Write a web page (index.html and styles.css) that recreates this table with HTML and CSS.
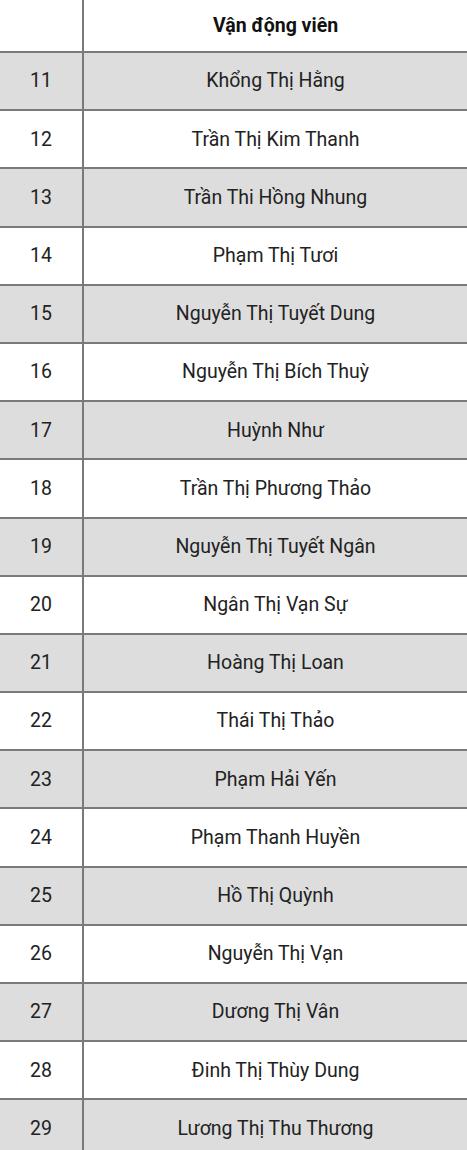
FILE: index.html
```html
<!DOCTYPE html>
<html lang="vi">
<head>
<meta charset="utf-8">
<link rel="stylesheet" href="styles.css">
</head>
<body>
<table class="roster">
  <thead>
    <tr><th class="num"></th><th class="name">Vận động viên</th></tr>
  </thead>
  <tbody>
    <tr class="alt"><td class="num">11</td><td class="name">Khổng Thị Hằng</td></tr>
    <tr><td class="num">12</td><td class="name">Trần Thị Kim Thanh</td></tr>
    <tr class="alt"><td class="num">13</td><td class="name">Trần Thi Hồng Nhung</td></tr>
    <tr><td class="num">14</td><td class="name">Phạm Thị Tươi</td></tr>
    <tr class="alt"><td class="num">15</td><td class="name">Nguyễn Thị Tuyết Dung</td></tr>
    <tr><td class="num">16</td><td class="name">Nguyễn Thị Bích Thuỳ</td></tr>
    <tr class="alt"><td class="num">17</td><td class="name">Huỳnh Như</td></tr>
    <tr><td class="num">18</td><td class="name">Trần Thị Phương Thảo</td></tr>
    <tr class="alt"><td class="num">19</td><td class="name">Nguyễn Thị Tuyết Ngân</td></tr>
    <tr><td class="num">20</td><td class="name">Ngân Thị Vạn Sự</td></tr>
    <tr class="alt"><td class="num">21</td><td class="name">Hoàng Thị Loan</td></tr>
    <tr><td class="num">22</td><td class="name">Thái Thị Thảo</td></tr>
    <tr class="alt"><td class="num">23</td><td class="name">Phạm Hải Yến</td></tr>
    <tr><td class="num">24</td><td class="name">Phạm Thanh Huyền</td></tr>
    <tr class="alt"><td class="num">25</td><td class="name">Hồ Thị Quỳnh</td></tr>
    <tr><td class="num">26</td><td class="name">Nguyễn Thị Vạn</td></tr>
    <tr class="alt"><td class="num">27</td><td class="name">Dương Thị Vân</td></tr>
    <tr><td class="num">28</td><td class="name">Đinh Thị Thùy Dung</td></tr>
    <tr class="alt"><td class="num">29</td><td class="name">Lương Thị Thu Thương</td></tr>
  </tbody>
</table>
</body>
</html>
```
FILE: styles.css
```css
html, body {
  margin: 0;
  padding: 0;
  background: #ffffff;
}
body {
  font-family: Roboto, "Noto Sans", sans-serif;
  color: #222222;
}
.roster {
  width: 100%;
  border-collapse: collapse;
  table-layout: fixed;
}
.roster th,
.roster td {
  border: 2px solid #7a7a7a;
  text-align: center;
  padding: 0;
  font-size: 19.5px;
  line-height: 1.2;
}
.roster th {
  height: 51px;
  font-weight: 700;
  border-top: none;
  color: #111111;
}
.roster td {
  height: 56.2px;
}
.roster tr > :first-child {
  border-left: none;
}
.roster tr > :last-child {
  border-right: none;
}
.roster .num {
  width: 82px;
}
.roster .alt td {
  background: #dddddd;
}
```
